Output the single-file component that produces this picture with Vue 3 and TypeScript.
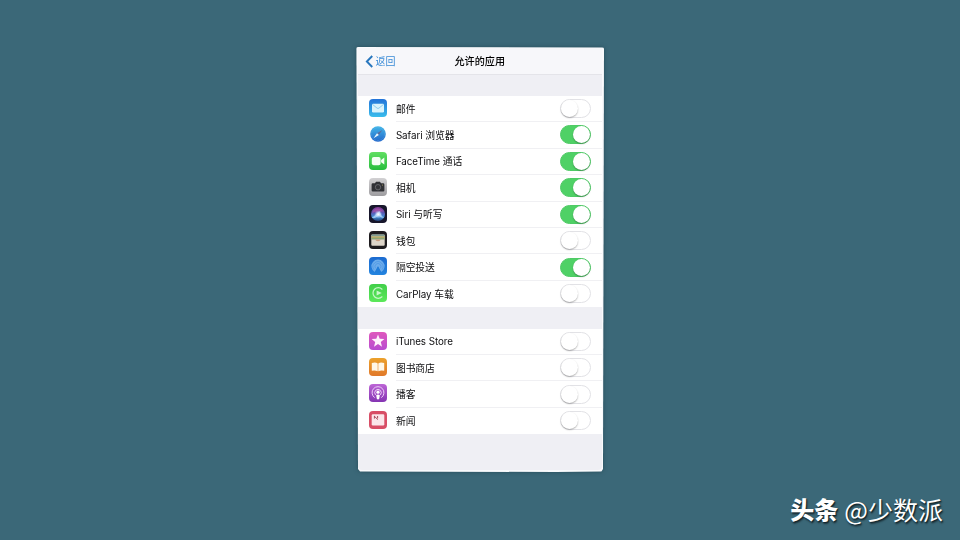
<script setup lang="ts">
import { reactive } from 'vue'

interface AppItem {
  icon: string
  label: string
  on: boolean
}

const groups = reactive<AppItem[][]>([
  [
    { icon: 'mail', label: '邮件', on: false },
    { icon: 'safari', label: 'Safari 浏览器', on: true },
    { icon: 'facetime', label: 'FaceTime 通话', on: true },
    { icon: 'camera', label: '相机', on: true },
    { icon: 'siri', label: 'Siri 与听写', on: true },
    { icon: 'wallet', label: '钱包', on: false },
    { icon: 'airdrop', label: '隔空投送', on: true },
    { icon: 'carplay', label: 'CarPlay 车载', on: false },
  ],
  [
    { icon: 'itunes', label: 'iTunes Store', on: false },
    { icon: 'books', label: '图书商店', on: false },
    { icon: 'podcasts', label: '播客', on: false },
    { icon: 'news', label: '新闻', on: false },
  ],
])
</script>

<template>
  <main class="stage">
    <div class="shadow">
      <section class="card">
        <div class="screen">
          <header class="nav">
            <button class="back" type="button">
              <svg class="chevron" viewBox="0 0 8 13"><path d="M7 1 L1.6 6.5 L7 12" /></svg>
              <span>返回</span>
            </button>
            <h1 class="title">允许的应用</h1>
          </header>
          <ul v-for="(group, g) in groups" :key="g" class="group">
            <li v-for="item in group" :key="item.icon" class="row">
              <svg class="icon" viewBox="0 0 18 18">
                <defs>
                  <linearGradient id="g-mail" x2="0" y2="1"><stop stop-color="#2373d8" /><stop offset="1" stop-color="#39bdec" /></linearGradient>
                  <linearGradient id="g-safari" x2="0" y2="1"><stop stop-color="#42b6e8" /><stop offset="1" stop-color="#2266ca" /></linearGradient>
                  <linearGradient id="g-green" x2="0" y2="1"><stop stop-color="#61df62" /><stop offset="1" stop-color="#27bd3d" /></linearGradient>
                  <linearGradient id="g-lime" x2="0" y2="1"><stop stop-color="#41cf4a" /><stop offset="1" stop-color="#5ce85a" /></linearGradient>
                  <linearGradient id="g-cam" x2="0" y2="1"><stop stop-color="#d2d1d3" /><stop offset="1" stop-color="#9d9c9f" /></linearGradient>
                  <linearGradient id="g-siri" x2="0" y2="1"><stop stop-color="#8b3a92" /><stop offset=".4" stop-color="#5a56b4" /><stop offset=".7" stop-color="#4692d6" /><stop offset="1" stop-color="#25427b" /></linearGradient>
                  <radialGradient id="g-glow"><stop stop-color="#fff" /><stop offset=".4" stop-color="#dcecff" stop-opacity=".7" /><stop offset="1" stop-color="#9cc8ff" stop-opacity="0" /></radialGradient>
                  <linearGradient id="g-drop" x2="0" y2="1"><stop stop-color="#1c6bd0" /><stop offset="1" stop-color="#2384df" /></linearGradient>
                  <linearGradient id="g-itunes" x2="0" y2="1"><stop stop-color="#df58bd" /><stop offset="1" stop-color="#b84bd0" /></linearGradient>
                  <linearGradient id="g-books" x2="0" y2="1"><stop stop-color="#eca12b" /><stop offset="1" stop-color="#e0782a" /></linearGradient>
                  <linearGradient id="g-pod" x2="0" y2="1"><stop stop-color="#bd65d6" /><stop offset="1" stop-color="#8434b2" /></linearGradient>
                </defs>
                <g v-if="item.icon === 'mail'">
                  <rect width="18" height="18" rx="4" fill="url(#g-mail)" />
                  <rect x="3" y="4.8" width="12" height="8.6" rx="1.2" fill="#d9f3fc" />
                  <path d="M3.5 5.4 L8 9.1 Q9 9.8 10 9.1 L14.5 5.4" fill="none" stroke="#68bce7" stroke-width=".7" />
                </g>
                <g v-else-if="item.icon === 'safari'">
                  <circle cx="9" cy="9" r="7.8" fill="url(#g-safari)" />
                  <circle cx="9" cy="9" r="6.5" fill="none" stroke="#7cbfe9" stroke-width=".5" stroke-dasharray=".5 1" />
                  <path d="M13.3 5 L9.8 10 L8.1 8.3 Z" fill="#5c6a9c" />
                  <path d="M4.5 13.2 L8 8.2 L9.9 10.1 Z" fill="#edf7fd" />
                </g>
                <g v-else-if="item.icon === 'facetime'">
                  <rect width="18" height="18" rx="4" fill="url(#g-green)" />
                  <rect x="2.8" y="5" width="8.8" height="8.2" rx="2" fill="#f5fff5" />
                  <path d="M12.1 8 L15.3 5.6 V12.6 L12.1 10.2 Z" fill="#f5fff5" />
                </g>
                <g v-else-if="item.icon === 'camera'">
                  <rect width="18" height="18" rx="4" fill="url(#g-cam)" />
                  <path d="M3.8 5.3 H6 L7 3.8 H11 L12 5.3 H14.2 Q15.4 5.3 15.4 6.5 V12.2 Q15.4 13.4 14.2 13.4 H3.8 Q2.6 13.4 2.6 12.2 V6.5 Q2.6 5.3 3.8 5.3Z" fill="#303135" />
                  <circle cx="9" cy="9.2" r="2.7" fill="#333438" stroke="#77777c" stroke-width=".7" />
                  <circle cx="13.5" cy="7" r=".5" fill="#b8aa68" />
                </g>
                <g v-else-if="item.icon === 'siri'">
                  <rect width="18" height="18" rx="4" fill="#17162b" />
                  <circle cx="9" cy="9" r="7" fill="url(#g-siri)" />
                  <path d="M3 8 C5 2.4 11 2.4 14.6 6.5 C11 6 10 7.8 9 9 C7 7 5 6.5 3 8Z" fill="#c05aaa" opacity=".55" />
                  <path d="M2.6 12.4 C6 11.6 8 7 10.6 6.2 C11.6 8.4 12.4 11.8 15.2 12.2 C12.8 13.6 11 11.8 9.8 10.4 C7.6 12.4 5 14 2.6 12.4Z" fill="#bfe0ff" opacity=".7" />
                  <circle cx="9.3" cy="9.4" r="4.2" fill="url(#g-glow)" />
                </g>
                <g v-else-if="item.icon === 'wallet'">
                  <rect width="18" height="18" rx="4" fill="#1d1b1e" />
                  <rect x="2.3" y="3.4" width="13.4" height="11.4" rx="1" fill="#ddd5c9" />
                  <path d="M2.3 4.4 Q2.3 3.4 3.3 3.4 H14.7 Q15.7 3.4 15.7 4.4 V5.2 H2.3Z" fill="#7f9c91" />
                  <path d="M2.3 5.2 H15.7 V7 H2.3Z" fill="#b0a969" />
                  <path d="M2.3 7 H15.7 V8.6 H2.3Z" fill="#8ba676" />
                  <path d="M6.2 8.6 H11.8 Q11.3 10.2 9 10.2 T6.2 8.6Z" fill="#c99a7c" />
                </g>
                <g v-else-if="item.icon === 'airdrop'">
                  <rect width="18" height="18" rx="4" fill="url(#g-drop)" />
                  <path d="M5.7 14.9 A6.6 6.6 0 1 1 12.3 14.9 L9 9.3Z" fill="#6caceb" />
                  <path d="M5 12.7 A5 5 0 1 1 13 12.7 M6.6 11.3 A3 3 0 1 1 11.4 11.3" fill="none" stroke="#4a95e4" stroke-width=".7" />
                  <path d="M6.4 15.2 L9 9.5 L11.6 15.2Z" fill="#237fda" />
                </g>
                <g v-else-if="item.icon === 'carplay'">
                  <rect width="18" height="18" rx="4" fill="url(#g-lime)" />
                  <path d="M13 5.2 A5.3 5.3 0 1 0 13 12.8" fill="none" stroke="#c9f6c9" stroke-width="1.2" stroke-linecap="round" />
                  <path d="M7.6 6.5 L12.8 9 L7.6 11.5Z" fill="#c9f6c9" />
                </g>
                <g v-else-if="item.icon === 'itunes'">
                  <rect width="18" height="18" rx="4" fill="url(#g-itunes)" />
                  <path d="M9 2.5 L10.7 6.8 L15.4 7.1 L11.8 10.1 L13 14.7 L9 12.1 L5 14.7 L6.2 10.1 L2.6 7.1 L7.3 6.8Z" fill="#fff1fc" />
                </g>
                <g v-else-if="item.icon === 'books'">
                  <rect width="18" height="18" rx="4" fill="url(#g-books)" />
                  <path d="M2.8 5 Q6.5 3.8 8.7 5.4 V13.3 Q6 11.9 2.8 12.8Z M15.2 5 Q11.5 3.8 9.3 5.4 V13.3 Q12 11.9 15.2 12.8Z" fill="#fff7e7" />
                </g>
                <g v-else-if="item.icon === 'podcasts'">
                  <rect width="18" height="18" rx="4" fill="url(#g-pod)" />
                  <path d="M5.3 13.4 A6 6 0 1 1 12.7 13.4 M6.3 10.6 A3.3 3.3 0 1 1 11.7 10.6" fill="none" stroke="#edcef8" stroke-width="1" stroke-linecap="round" />
                  <circle cx="9" cy="8.2" r="1.6" fill="#fff" />
                  <path d="M7.2 11.2 Q9 10 10.8 11.2 L10.1 15 Q9 15.9 7.9 15Z" fill="#fff" />
                </g>
                <g v-else>
                  <rect width="18" height="18" rx="4" fill="#d84e66" />
                  <rect x="2.7" y="3.3" width="12.6" height="11.2" rx="1.2" fill="#fbe6ea" />
                  <path d="M5.2 5 L8.8 8.6 M5.4 7.6 V5 M8.6 5 V7.4" fill="none" stroke="#a84a5c" stroke-width="1" />
                </g>
              </svg>
              <div class="body">
                <span class="label">{{ item.label }}</span>
                <button
                  class="switch"
                  :class="{ on: item.on }"
                  type="button"
                  role="switch"
                  :aria-checked="item.on"
                  @click="item.on = !item.on"
                ><i class="knob"></i></button>
              </div>
            </li>
          </ul>
        </div>
      </section>
    </div>
    <footer class="credit"><strong>头条</strong><span>@少数派</span></footer>
  </main>
</template>

<style>
body {
  margin: 0;
}
</style>

<style scoped>
.stage {
  position: relative;
  box-sizing: border-box;
  width: 960px;
  height: 540px;
  padding: 47px 0 0 356px;
  overflow: hidden;
  background: #3b6878;
  font-family: Inter, 'Noto Sans CJK SC', sans-serif;
  color: #0c0c0e;
}
.shadow {
  width: 248px;
  filter: drop-shadow(0 0 2px rgba(20, 48, 60, 0.5));
}
.card {
  box-sizing: border-box;
  width: 248px;
  height: 425px;
  padding: 1px 2px 2px 2px;
  background: #f9fafc;
  border-radius: 2px 2px 4px 4px;
  clip-path: polygon(0.4px 0, 248px 0.5px, 247px 422px, 245.5px 424.5px, 200px 425px, 4px 424.5px, 2px 422px);
}
.screen {
  height: 100%;
  border-radius: 1px 1px 4px 4px;
  background: #efeff4;
  overflow: hidden;
}
.nav {
  display: grid;
  grid-template-columns: 1fr auto 1fr;
  align-items: center;
  box-sizing: border-box;
  height: 26.5px;
  padding: 0 0 0 6.5px;
  background: #f7f7fa;
  border-bottom: 1px solid #e4e4e9;
}
.back {
  display: flex;
  align-items: center;
  gap: 2.5px;
  padding: 1px 0 0;
  border: 0;
  background: none;
  font: inherit;
  font-size: 10px;
  line-height: 14px;
  color: #3a8bd6;
}
.chevron {
  width: 8.5px;
  height: 13px;
  fill: none;
  stroke: #2876bd;
  stroke-width: 1.9;
}
.title {
  margin: 0 7px 0 0;
  font-size: 10.1px;
  font-weight: 500;
  line-height: 14px;
  color: #000;
}
.group {
  margin: 21.3px 0 0;
  padding: 0;
  list-style: none;
  background: #fff;
}
.row {
  display: flex;
  align-items: center;
  gap: 8.5px;
  height: 26.45px;
  padding-left: 11.4px;
}
.icon {
  flex: none;
  width: 18px;
  height: 18px;
  margin-top: -2.5px;
  overflow: visible;
}
.body {
  flex: 1;
  display: flex;
  align-items: center;
  justify-content: space-between;
  box-sizing: border-box;
  height: 100%;
  padding-right: 11.5px;
  border-bottom: 1px solid #f0f0f3;
}
.row:last-child .body {
  border-bottom-color: transparent;
}
.label {
  padding-top: 2px;
  font-size: 9.8px;
  line-height: 14px;
  letter-spacing: -0.06px;
  white-space: nowrap;
}
.switch {
  display: flex;
  align-items: center;
  box-sizing: border-box;
  width: 31px;
  height: 19px;
  padding: 0;
  border: 1px solid #e2e2e6;
  border-radius: 10px;
  background: #fff;
}
.knob {
  width: 17px;
  height: 17px;
  border-radius: 50%;
  background: #fff;
  box-shadow: 0 1px 1.5px rgba(0, 0, 0, 0.3);
}
.switch.on {
  justify-content: flex-end;
  border-color: #4fca66;
  background: #4fd166;
}
.credit {
  position: absolute;
  right: 17px;
  bottom: 13px;
  display: flex;
  align-items: center;
  gap: 6px;
  font-family: 'Noto Sans CJK SC', sans-serif;
  font-size: 25px;
  line-height: 36px;
  color: #fff;
  text-shadow: 1px 1px 1px #14262d, 1px 2px 2px rgba(0, 0, 0, 0.5);
}
.credit strong {
  font-size: 24px;
  font-weight: 900;
}
</style>
